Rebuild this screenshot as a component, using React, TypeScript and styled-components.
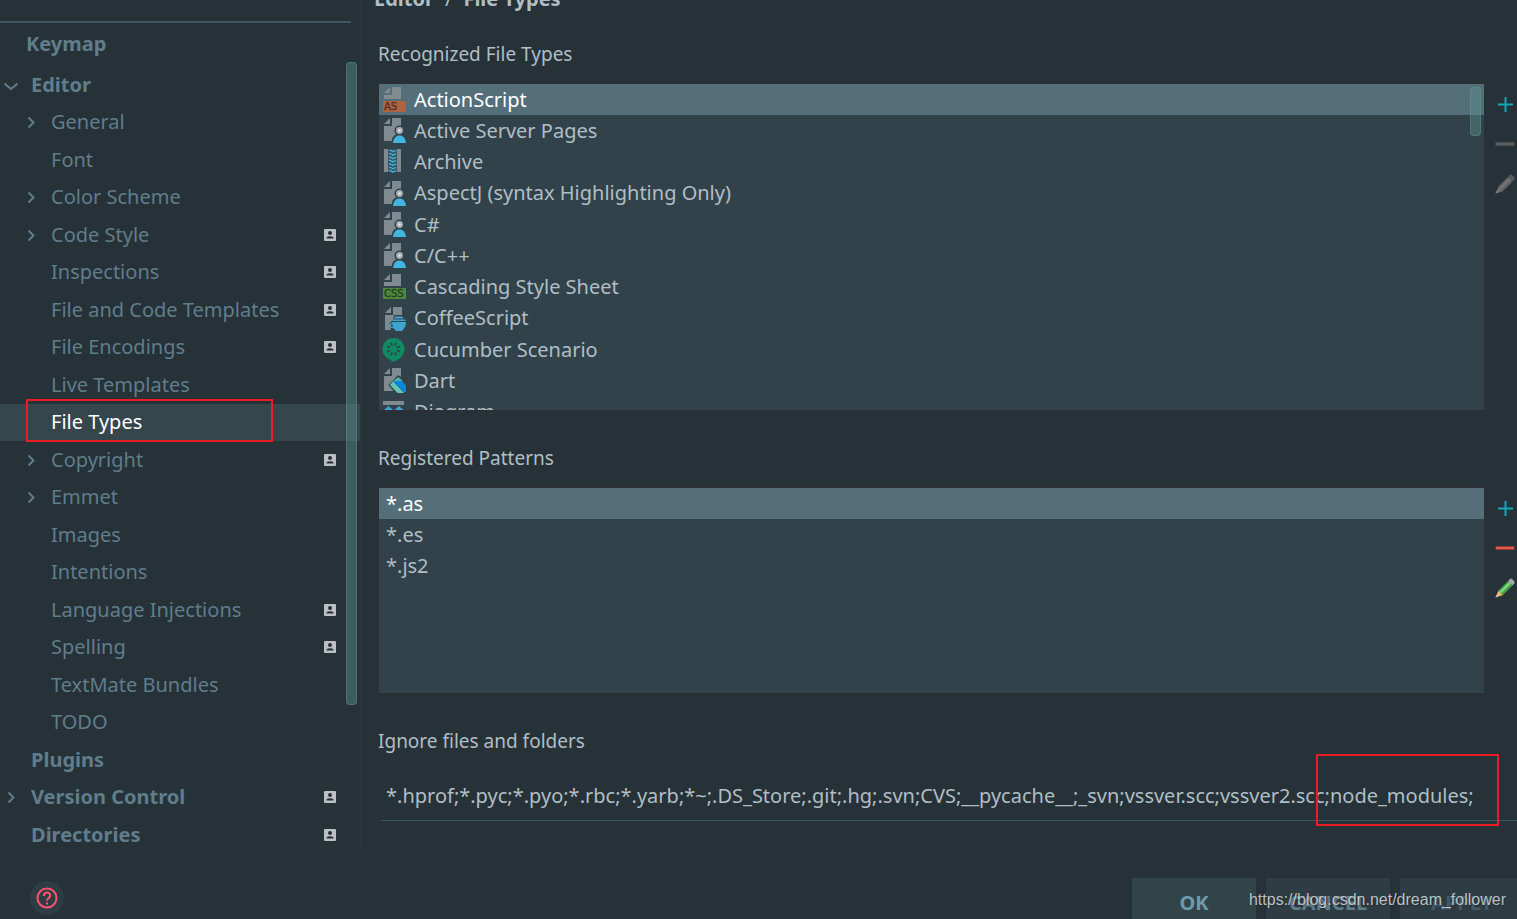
import React from "react";
import styled, { createGlobalStyle, css } from "styled-components";

const c = {
  page: "#263238",
  tree: "#607d8b",
  text: "#b0bec5",
  white: "#ffffff",
  list: "#32424a",
  listEdge: "#2f2f33",
  selected: "#546e7a",
  treeSelected: "#36464d",
  rule: "#2a363f",
  field: "#3c5563",
  thumb: "rgba(90, 145, 140, 0.45)",
  red: "#ed1c24",
};

const GlobalStyle = createGlobalStyle`
  * { box-sizing: border-box; }
  body {
    margin: 0;
    background: ${c.page};
    color: ${c.text};
    font-family: "Noto Sans", "Open Sans", sans-serif;
    font-size: 20px;
    line-height: 30px;
  }
  button, input { font: inherit; color: inherit; }
  ul { list-style: none; margin: 0; padding: 0; }
`;

const Page = styled.div`
  position: relative;
  display: flex;
  flex-direction: column;
  height: 100vh;
  overflow: hidden;
`;

const Body = styled.div`
  display: flex;
  flex: 1;
  min-height: 0;
`;

const PlainButton = styled.button`
  display: flex;
  align-items: center;
  width: 100%;
  height: 100%;
  padding: 0;
  border: 0;
  background: none;
  text-align: left;
  white-space: nowrap;
  cursor: pointer;
`;

const Sidebar = styled.nav`
  position: relative;
  flex: 0 0 361px;
  border-right: 1px solid ${c.rule};
  color: ${c.tree};
`;

const SearchEdge = styled.div`
  height: 23px;
  margin-right: 9px;
  border-bottom: 2px solid #3f5866;
`;

const TreeItem = styled.li<{ $active?: boolean }>`
  position: relative;
  height: 38px;
  color: ${(p) => (p.$active ? c.white : "inherit")};
  background: ${(p) => (p.$active ? c.treeSelected : "none")};
  &:nth-child(odd) { height: 37px; padding-bottom: 1px; }
  &:first-child { height: 43px; }
`;

const TreeButton = styled(PlainButton)<{ $level: number }>`
  padding: 0 24px 0 ${(p) => (p.$level === 2 ? 24 : 4)}px;
  font-weight: ${(p) => (p.$level === 2 ? 400 : 700)};
  ${(p) => p.$level === 0 && css`padding-left: 0;`}
`;

const Arrow = styled.span<{ $wide: boolean }>`
  display: flex;
  flex: 0 0 ${(p) => (p.$wide ? 27 : 26)}px;
`;

const TreeLabel = styled.span`
  flex: 1;
`;

const Thumb = styled.div<{ $height: number }>`
  position: absolute;
  top: 62px;
  right: 3px;
  width: 11px;
  height: ${(p) => p.$height}px;
  border: 1px solid rgba(100, 160, 155, 0.35);
  border-radius: 4px;
  background: ${c.thumb};
`;

const Callout = styled.div`
  position: absolute;
  border: 2px solid ${c.red};
  pointer-events: none;
`;

const TreeCallout = styled(Callout)`
  left: 26px;
  top: -5px;
  width: 247px;
  height: 43px;
`;

const FieldCallout = styled(Callout)`
  right: 18px;
  bottom: -5px;
  width: 183px;
  height: 72px;
`;

const Main = styled.main`
  display: flex;
  flex-direction: column;
  flex: 1;
  min-width: 0;
  padding-left: 17px;
`;

const Title = styled.h1`
  display: flex;
  gap: 11px;
  margin: -16px 0 25px -4px;
  font-size: 20px;
  line-height: 30px;
`;

const Slash = styled.span`
  font-weight: 400;
`;

const Section = styled.section<{ $gap: number }>`
  margin-bottom: ${(p) => p.$gap}px;
`;

const Legend = styled.h2`
  display: flex;
  align-items: center;
  gap: 8px;
  margin: 0 0 14px;
  font-size: 19px;
  font-weight: 400;
  line-height: 30px;
  &::after {
    content: "";
    flex: 1;
    border-top: 1px solid ${c.rule};
  }
`;

const ListRow = styled.div`
  display: flex;
`;

const List = styled.div<{ $height: number }>`
  position: relative;
  flex: 1;
  min-width: 0;
  height: ${(p) => p.$height}px;
  overflow: hidden;
  border: 1px solid ${c.listEdge};
  background: ${c.list};
`;

const ListItem = styled.li<{ $active?: boolean }>`
  height: 31px;
  color: ${(p) => (p.$active ? c.white : "inherit")};
  background: ${(p) => (p.$active ? c.selected : "none")};
  &:nth-child(4n) { height: 32px; }
`;

const TypeButton = styled(PlainButton)`
  gap: 8px;
  padding-left: 3px;
`;

const PatternButton = styled(PlainButton)`
  padding-left: 7px;
`;

const ListThumb = styled(Thumb)`
  top: 3px;
`;

const Tools = styled.div`
  display: flex;
  flex-direction: column;
  flex: 0 0 32px;
  padding-top: 1px;
`;

const ToolButton = styled.button`
  display: flex;
  align-items: center;
  justify-content: flex-end;
  height: 40px;
  padding: 0 2px 0 0;
  border: 0;
  background: none;
`;

const FieldWrap = styled.div`
  position: relative;
  margin-left: 3px;
`;

const Field = styled.input`
  display: block;
  width: 100%;
  height: 51px;
  padding: 0 0 0 5px;
  border: 0;
  border-bottom: 1px solid ${c.field};
  outline: 0;
  background: none;
`;

const Footer = styled.footer`
  display: flex;
  align-items: flex-start;
  flex: 0 0 65px;
  min-height: 0;
  gap: 10px;
  margin-right: -7px;
  padding: 24px 0 0 30px;
`;

const HelpButton = styled.button`
  display: flex;
  align-items: center;
  justify-content: center;
  width: 34px;
  height: 34px;
  margin: 3px auto 0 0;
  padding: 0;
  border: 0;
  border-radius: 50%;
  background: #2e3c43;
`;

const ActionButton = styled.button<{ $primary?: boolean; $muted?: boolean }>`
  width: 124px;
  height: 50px;
  padding: 0;
  border: 0;
  background: ${(p) => (p.$primary ? "#314549" : "#2e3c43")};
  color: ${(p) => (p.$primary ? "#6f9aae" : p.$muted ? "#415967" : "#607d8b")};
  font-size: 20px;
  font-weight: 700;
`;

const Watermark = styled.div`
  position: absolute;
  right: 11px;
  bottom: 8px;
  color: rgba(215, 219, 222, 0.85);
  font-family: "Liberation Sans", Arial, sans-serif;
  font-size: 16px;
  line-height: 22px;
  text-shadow: 1px 1px 2px rgba(0, 0, 0, 0.25);
`;

const Chevron = ({ open }: { open?: boolean }) => (
  <svg width="24" height="16" fill="none" stroke={c.tree} strokeWidth="2" aria-hidden="true">
    {open ? <path d="M0.5 6.5 L7 12 L13.5 6.5" /> : <path d="M4.5 3.5 L9.5 8.5 L4.5 13.5" />}
  </svg>
);

const Badge = () => (
  <svg width="12" height="12" viewBox="0 0 12 12" role="img" aria-label="Project setting">
    <rect width="12" height="12" rx="1" fill="#bcc0c3" />
    <circle cx="6" cy="4" r="2" fill="#263238" />
    <path d="M2.5 9.5 V8.6 Q3.5 7.3 6 7.3 T9.5 8.6 V9.5 Z" fill="#263238" />
  </svg>
);

const fileGrey = "#7f8b91";
const Sheet = ({ short }: { short?: boolean }) => (
  <>
    <path d="M2 6 L8 0 V6 Z" fill={fileGrey} />
    <path d={short ? "M10 0 H19 V12 H2 V8 H10 Z" : "M10 0 H19 V23 H2 V8 H10 Z"} fill={fileGrey} />
  </>
);

const Tag = ({ text, fill, ink }: { text: string; fill: string; ink: string }) => (
  <>
    <Sheet short />
    <rect x="1" y="14" width="23" height="11" fill={fill} />
    <text x="2" y="23" fontFamily="DejaVu Sans, sans-serif" fontSize="10" fill={ink} stroke={ink} strokeWidth="0.3">
      {text}
    </text>
  </>
);

const spokes = [0, 45, 90, 135, 180, 225, 270, 315];

const art: Record<string, React.ReactNode> = {
  as: <Tag text="AS" fill="#b0633f" ink="#4a3029" />,
  css: <Tag text="CSS" fill="#4b8a3c" ink="#24401f" />,
  user: (
    <>
      <Sheet />
      <circle cx="17.5" cy="12.5" r="5" fill={c.list} />
      <path d="M9.5 25 C9.5 19 13 15.5 17.5 15.5 S25 19 25 25 Z" fill={c.list} />
      <circle cx="17.5" cy="12.5" r="3.4" fill="#a9b0b4" />
      <circle cx="17.5" cy="12.5" r="1.3" fill="#e4e6e7" />
      <path d="M11 25 C11.5 20 14 17.5 17.5 17.5 S23.5 20 24 25 Z" fill="#40b6e0" />
    </>
  ),
  archive: (
    <>
      <path d="M2 0 H6 V23 H2 Z M15 0 H19 V23 H15 Z" fill={fileGrey} />
      <path d="M6 0 H15 V23 H6 Z" fill="#3b5562" />
      <path
        d="M7 1 l4 1.5 M10 3 l4 -1.5 M7 4.4 l4 1.5 M10 6.4 l4 -1.5 M7 7.8 l4 1.5 M10 9.8 l4 -1.5 M7 11.2 l4 1.5 M10 13.2 l4 -1.5 M7 14.6 l4 1.5 M10 16.6 l4 -1.5 M7 18 l4 1.5 M10 20 l4 -1.5 M7 21.4 l4 1.5 M10 23.4 l4 -1.5"
        stroke="#40b6e0"
        strokeWidth="1.3"
      />
    </>
  ),
  coffee: (
    <>
      <g transform="translate(1 1)"><Sheet /></g>
      <path d="M12 9 H22 L24 13 V25 H9 L7.5 17 L11 14 Z" fill={c.list} />
      <path d="M13 10.5 H20.5 L21.5 12.5 H12 Z" fill="#40a4d0" />
      <path d="M11 13.5 H23 L24 15 H10 Z" fill="#40a4d0" />
      <path d="M10 16 H24 C24 20 22.5 22.5 20 25 H14 C12 23 10 20 10 16 Z" fill="#40a4d0" />
      <path d="M10.5 17.5 C7.5 17 7 22 12 21.5" fill="none" stroke="#40a4d0" strokeWidth="1.3" />
    </>
  ),
  cucumber: (
    <>
      <circle cx="11.5" cy="12" r="11" fill="#108a62" />
      <path d="M9 22 L9.5 25 C14 24 17 22.5 19 20 Z" fill="#108a62" />
      <g stroke="#2a4a4a" strokeWidth="2" strokeLinecap="round">
        {spokes.map((a) => (
          <path key={a} d="M11.5 7.5 V6" transform={`rotate(${a + 22} 11.5 12)`} />
        ))}
      </g>
    </>
  ),
  dart: (
    <>
      <Sheet />
      <path d="M6.5 17 L16 7 L24 12 V25 H13 Z" fill={c.list} />
      <path d="M8 17 L11 13 L22 25 H15.5 Z" fill="#66c3b5" />
      <path d="M11 13 H20 L24 17.5 V24 H21.5 Z" fill="#0a85e0" />
      <path d="M11 13 L16.5 9 L20.5 13 Z" fill="#4fb3a8" />
    </>
  ),
  diagram: (
    <>
      <path d="M1 2 H22 V6 H1 Z" fill={fileGrey} />
      <path d="M2 11 L6.5 7 L11 11 V16 H2 Z M12.5 11 L17 7 L21.5 11 V16 H12.5 Z" fill="#40a4d0" />
    </>
  ),
};

const TypeIcon = ({ kind }: { kind: string }) => (
  <svg width="24" height="25" viewBox="0 0 24 25" aria-hidden="true">{art[kind]}</svg>
);

const Plus = () => (
  <svg width="20" height="20" aria-hidden="true">
    <path d="M10.5 3 V18 M3 10.5 H18" stroke="#11a7bb" strokeWidth="2" fill="none" />
  </svg>
);

const Minus = ({ off }: { off?: boolean }) => (
  <svg width="20" height="20" aria-hidden="true">
    <rect x="0.5" y="8" width="19" height="4" fill={off ? "#4b4f51" : "#8e3a38"} />
    <rect x="1" y="9" width="18" height="2" fill={off ? "#5b5d5e" : "#dd5c4d"} />
  </svg>
);

const Pencil = ({ off }: { off?: boolean }) => (
  <svg width="20" height="20" aria-hidden="true">
    <path d="M0.5 19.5 L3.5 12.5 L8 17 Z" fill={off ? "#707070" : "#f0b868"} />
    <path d="M0.5 19.5 L1.6 16.8 L3.4 18.6 Z" fill={off ? "#858585" : "#b9bdc0"} />
    <path d="M3.5 12.5 L13 3 L17.5 7.5 L8 17 Z" fill={off ? "#636363" : "#43a047"} />
    <path d="M4.5 13.5 L14 4 L15.8 5.8 L6.3 15.3 Z" fill={off ? "#747474" : "#7fd881"} />
    <path d="M13 3 L15.2 0.8 Q16 0.2 17 1 L19.2 3.2 Q20 4.2 19.4 5.2 L17.5 7.5 Z" fill={off ? "#5a5a5a" : "#a4a9ac"} />
  </svg>
);

const HelpIcon = () => (
  <svg width="22" height="22" fill="none" stroke="#ff5370" strokeWidth="2" aria-hidden="true">
    <circle cx="11" cy="11" r="9.5" />
    <path d="M7.8 9 C7.8 4.5 14.2 4.5 14.2 8.6 C14.2 11 11 11.2 11 13.8" />
    <path d="M11 15.5 V17.5" />
  </svg>
);

type Node = { label: string; level: 0 | 1 | 2; arrow?: "open" | "closed"; badge?: boolean; active?: boolean };

const tree: Node[] = [
  { label: "Keymap", level: 0 },
  { label: "Editor", level: 1, arrow: "open" },
  { label: "General", level: 2, arrow: "closed" },
  { label: "Font", level: 2 },
  { label: "Color Scheme", level: 2, arrow: "closed" },
  { label: "Code Style", level: 2, arrow: "closed", badge: true },
  { label: "Inspections", level: 2, badge: true },
  { label: "File and Code Templates", level: 2, badge: true },
  { label: "File Encodings", level: 2, badge: true },
  { label: "Live Templates", level: 2 },
  { label: "File Types", level: 2, active: true },
  { label: "Copyright", level: 2, arrow: "closed", badge: true },
  { label: "Emmet", level: 2, arrow: "closed" },
  { label: "Images", level: 2 },
  { label: "Intentions", level: 2 },
  { label: "Language Injections", level: 2, badge: true },
  { label: "Spelling", level: 2, badge: true },
  { label: "TextMate Bundles", level: 2 },
  { label: "TODO", level: 2 },
  { label: "Plugins", level: 1 },
  { label: "Version Control", level: 1, arrow: "closed", badge: true },
  { label: "Directories", level: 1, badge: true },
];

const fileTypes = [
  ["ActionScript", "as"],
  ["Active Server Pages", "user"],
  ["Archive", "archive"],
  ["AspectJ (syntax Highlighting Only)", "user"],
  ["C#", "user"],
  ["C/C++", "user"],
  ["Cascading Style Sheet", "css"],
  ["CoffeeScript", "coffee"],
  ["Cucumber Scenario", "cucumber"],
  ["Dart", "dart"],
  ["Diagram", "diagram"],
];

const patterns = ["*.as", "*.es", "*.js2"];

const ListTools = ({ off, noun }: { off?: boolean; noun: string }) => (
  <Tools>
    <ToolButton aria-label={`Add ${noun}`}><Plus /></ToolButton>
    <ToolButton aria-label={`Remove ${noun}`} disabled={off}><Minus off={off} /></ToolButton>
    <ToolButton aria-label={`Edit ${noun}`} disabled={off}><Pencil off={off} /></ToolButton>
  </Tools>
);

export default function App() {
  return (
    <Page>
      <GlobalStyle />
      <Body>
        <Sidebar aria-label="Settings">
          <SearchEdge />
          <ul>
            {tree.map((n) => (
              <TreeItem key={n.label} $active={n.active}>
                <TreeButton $level={n.level}>
                  <Arrow $wide={n.level !== 0}>
                    {n.arrow && <Chevron open={n.arrow === "open"} />}
                  </Arrow>
                  <TreeLabel>{n.label}</TreeLabel>
                  {n.badge && <Badge />}
                </TreeButton>
                {n.active && <TreeCallout />}
              </TreeItem>
            ))}
          </ul>
          <Thumb $height={643} />
        </Sidebar>
        <Main>
          <Title>
            <span>Editor</span>
            <Slash>/</Slash>
            <span>File Types</span>
          </Title>
          <Section $gap={32}>
            <Legend>Recognized File Types</Legend>
            <ListRow>
              <List $height={328}>
                <ul>
                  {fileTypes.map(([name, kind], i) => (
                    <ListItem key={name} $active={i === 0}>
                      <TypeButton>
                        <TypeIcon kind={kind} />
                        {name}
                      </TypeButton>
                    </ListItem>
                  ))}
                </ul>
                <ListThumb $height={49} />
              </List>
              <ListTools off noun="file type" />
            </ListRow>
          </Section>
          <Section $gap={32}>
            <Legend>Registered Patterns</Legend>
            <ListRow>
              <List $height={207}>
                <ul>
                  {patterns.map((p, i) => (
                    <ListItem key={p} $active={i === 0}>
                      <PatternButton>{p}</PatternButton>
                    </ListItem>
                  ))}
                </ul>
              </List>
              <ListTools noun="pattern" />
            </ListRow>
          </Section>
          <Section $gap={0}>
            <Legend id="ignore-label">Ignore files and folders</Legend>
            <FieldWrap>
              <Field
                aria-labelledby="ignore-label"
                defaultValue="*.hprof;*.pyc;*.pyo;*.rbc;*.yarb;*~;.DS_Store;.git;.hg;.svn;CVS;__pycache__;_svn;vssver.scc;vssver2.scc;node_modules;"
              />
              <FieldCallout />
            </FieldWrap>
          </Section>
        </Main>
      </Body>
      <Footer>
        <HelpButton aria-label="Help"><HelpIcon /></HelpButton>
        <ActionButton $primary>OK</ActionButton>
        <ActionButton>CANCEL</ActionButton>
        <ActionButton $muted>APPLY</ActionButton>
      </Footer>
      <Watermark>https://blog.csdn.net/dream_follower</Watermark>
    </Page>
  );
}
